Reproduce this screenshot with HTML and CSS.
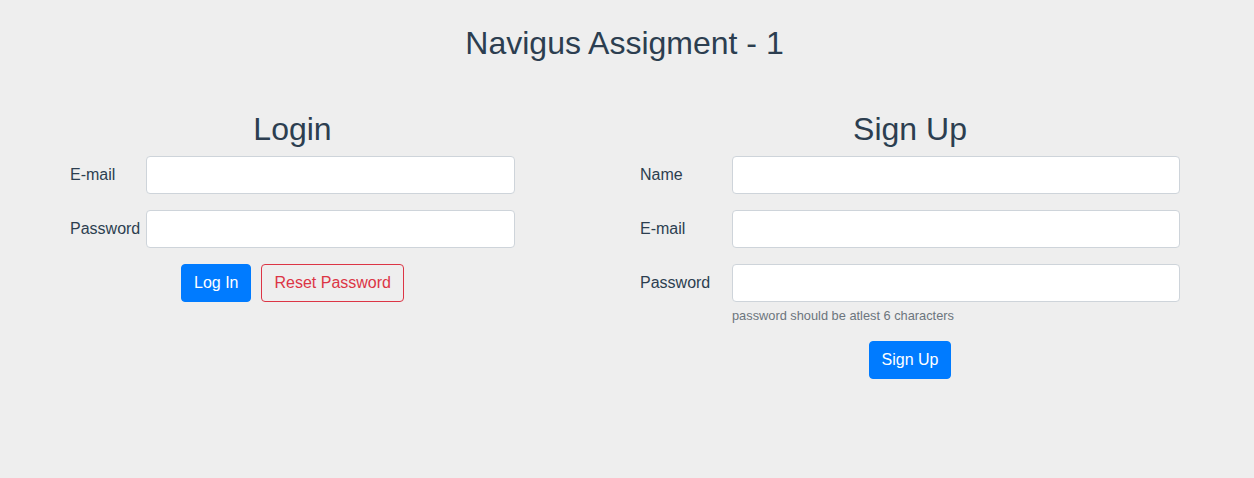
FILE: index.html
```html
<!DOCTYPE html>
<html lang="en">
<head>
<meta charset="utf-8">
<title>Navigus Assigment - 1</title>
<link rel="stylesheet" href="styles.css">
</head>
<body>
<div class="app">
  <h1 class="page-title">Navigus Assigment - 1</h1>
  <div class="panels">
    <section class="panel panel-login">
      <h2 class="panel-title">Login</h2>
      <div class="field">
        <label class="label label-login">E-mail</label>
        <input class="input" type="email">
      </div>
      <div class="field">
        <label class="label label-login">Password</label>
        <input class="input" type="password">
      </div>
      <div class="actions">
        <button class="btn btn-primary">Log In</button>
        <button class="btn btn-outline-danger">Reset Password</button>
      </div>
    </section>
    <section class="panel panel-signup">
      <h2 class="panel-title">Sign Up</h2>
      <div class="field">
        <label class="label label-signup">Name</label>
        <input class="input" type="text">
      </div>
      <div class="field">
        <label class="label label-signup">E-mail</label>
        <input class="input" type="email">
      </div>
      <div class="field field-help">
        <label class="label label-signup">Password</label>
        <div class="input-wrap">
          <input class="input input-block" type="password">
          <small class="help">password should be atlest 6 characters</small>
        </div>
      </div>
      <div class="actions">
        <button class="btn btn-primary">Sign Up</button>
      </div>
    </section>
  </div>
</div>
</body>
</html>
```

FILE: styles.css
```css
* { box-sizing: border-box; }
html, body { margin: 0; padding: 0; }
body {
  background: #eeeeee;
  font-family: "Liberation Sans", Arial, sans-serif;
  color: #2c3e50;
  font-size: 16px;
  line-height: 1.5;
  -webkit-font-smoothing: antialiased;
}
.app { padding-top: 24px; }
.page-title {
  margin: 0;
  padding-right: 5px;
  text-align: center;
  font-size: 32px;
  font-weight: 500;
  line-height: 1.2;
}
.panels {
  display: flex;
  gap: 125px;
  padding-left: 70px;
  margin-top: 48px;
}
.panel { display: flex; flex-direction: column; }
.panel-login { width: 445px; }
.panel-signup { width: 540px; }
.panel-title {
  margin: 0 0 7px;
  text-align: center;
  font-size: 32px;
  font-weight: 500;
  line-height: 1.2;
}
.field {
  display: flex;
  align-items: center;
  margin-bottom: 16px;
}
.field-help { align-items: flex-start; }
.field-help .label { height: 38px; }
.label {
  flex: none;
  display: flex;
  align-items: center;
}
.label-login { width: 76px; }
.label-signup { width: 92px; }
.input-wrap { flex: 1; display: flex; flex-direction: column; }
.input {
  flex: 1;
  width: 100%;
  height: 38px;
  border: 1px solid #ced4da;
  border-radius: 4px;
  background: #fff;
  font: inherit;
  padding: 6px 12px;
}
.input-block { flex: none; }
.help {
  margin-top: 4px;
  font-size: 12.8px;
  line-height: 1.5;
  color: #6c757d;
}
.actions {
  display: flex;
  justify-content: center;
  gap: 10px;
}
.btn {
  height: 38px;
  padding: 6px 12px;
  border-radius: 4px;
  font-family: inherit;
  font-size: 16px;
  line-height: 1.5;
  border: 1px solid transparent;
  cursor: pointer;
}
.btn-primary { background: #007bff; border-color: #007bff; color: #fff; }
.btn-outline-danger { background: transparent; border-color: #dc3545; color: #dc3545; }
```
